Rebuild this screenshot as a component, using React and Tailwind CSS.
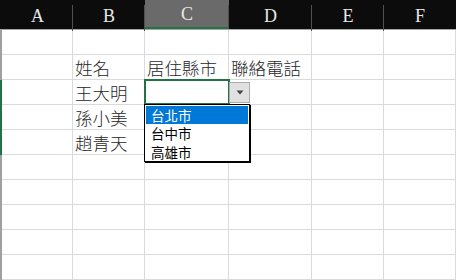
import React from "react";

const cols = [
  { k: "A", w: "w-[71px]" },
  { k: "B", w: "w-[72px]" },
  { k: "C", w: "w-[84px]" },
  { k: "D", w: "w-[83px]" },
  { k: "E", w: "w-[72px]" },
  { k: "F", w: "w-[72px]" },
];

const data = [
  ["", "", "", "", "", ""],
  ["", "姓名", "居住縣市", "聯絡電話", "", ""],
  ["", "王大明", "", "", "", ""],
  ["", "孫小美", "", "", "", ""],
  ["", "趙青天", "", "", "", ""],
  ["", "", "", "", "", ""],
  ["", "", "", "", "", ""],
  ["", "", "", "", "", ""],
  ["", "", "", "", "", ""],
  ["", "", "", "", "", ""],
];

const cellFont = { fontFamily: '"Noto Sans CJK TC", "Noto Sans", sans-serif' };

export default function App() {
  return (
    <div className="relative w-[456px] h-[280px] overflow-hidden bg-white">
      {/* header */}
      <div className="flex h-[30px] bg-[#0c0c0c] border-b border-[#a6a6a6]">
        <div className="w-[2px] bg-[#0c0c0c]" />
        {cols.map((c) => (
          <div
            key={c.k}
            className={`${c.w} shrink-0 relative flex items-end justify-center pb-[2px] ${
              c.k === "C" ? "bg-[#6a6a6a] border-b-2 border-[#217346]" : ""
            }`}
          >
            <span
              className="text-[18px] leading-[22px] text-[#e8e8e8]"
              style={{ fontFamily: '"Liberation Serif", serif' }}
            >
              {c.k}
            </span>
            {c.k !== "F" && (
              <div className="absolute right-0 top-[5px] bottom-[-2px] w-px bg-[#4f4f4f]" />
            )}
          </div>
        ))}
      </div>
      {/* rows */}
      {data.map((row, ri) => (
        <div key={ri} className="flex h-[25px]">
          <div
            className={`w-[2px] shrink-0 ${
              ri >= 2 && ri <= 4 ? "bg-[#217346]" : "bg-[#a0a0a0]"
            }`}
          />
          {cols.map((c, ci) => (
            <div
              key={c.k}
              className={`${c.w} shrink-0 border-r border-b border-[#dadada] flex items-end pl-[2px] overflow-visible whitespace-nowrap`}
            >
              <span
                className="text-[17.5px] leading-[22px] text-[#262626] font-light"
                style={cellFont}
              >
                {row[ci]}
              </span>
            </div>
          ))}
        </div>
      ))}

      {/* selected cell */}
      <div className="absolute left-[144px] top-[79px] w-[86px] h-[26px] border-2 border-[#217346]" />

      {/* dropdown button */}
      <div className="absolute left-[229px] top-[82px] w-[21px] h-[21px] bg-[#e1e1e1] border border-[#ababab] flex items-center justify-center">
        <svg width="8" height="5" viewBox="0 0 8 5">
          <path d="M0.5 0.5 L7.5 0.5 L4 4.5 Z" fill="#444" />
        </svg>
      </div>

      {/* dropdown list */}
      <div
        className="absolute left-[144px] top-[104px] w-[106px] h-[58px] bg-white border border-black shadow-[1px_1px_0_#000] p-px"
        style={cellFont}
      >
        <div className="h-[18px] bg-[#0078d7] text-white text-[13.5px] leading-[18px] pl-[5px]">
          台北市
        </div>
        <div className="h-[19px] text-black text-[13.5px] leading-[19px] pl-[5px]">
          台中市
        </div>
        <div className="h-[19px] text-black text-[13.5px] leading-[19px] pl-[5px]">
          高雄市
        </div>
      </div>
    </div>
  );
}
